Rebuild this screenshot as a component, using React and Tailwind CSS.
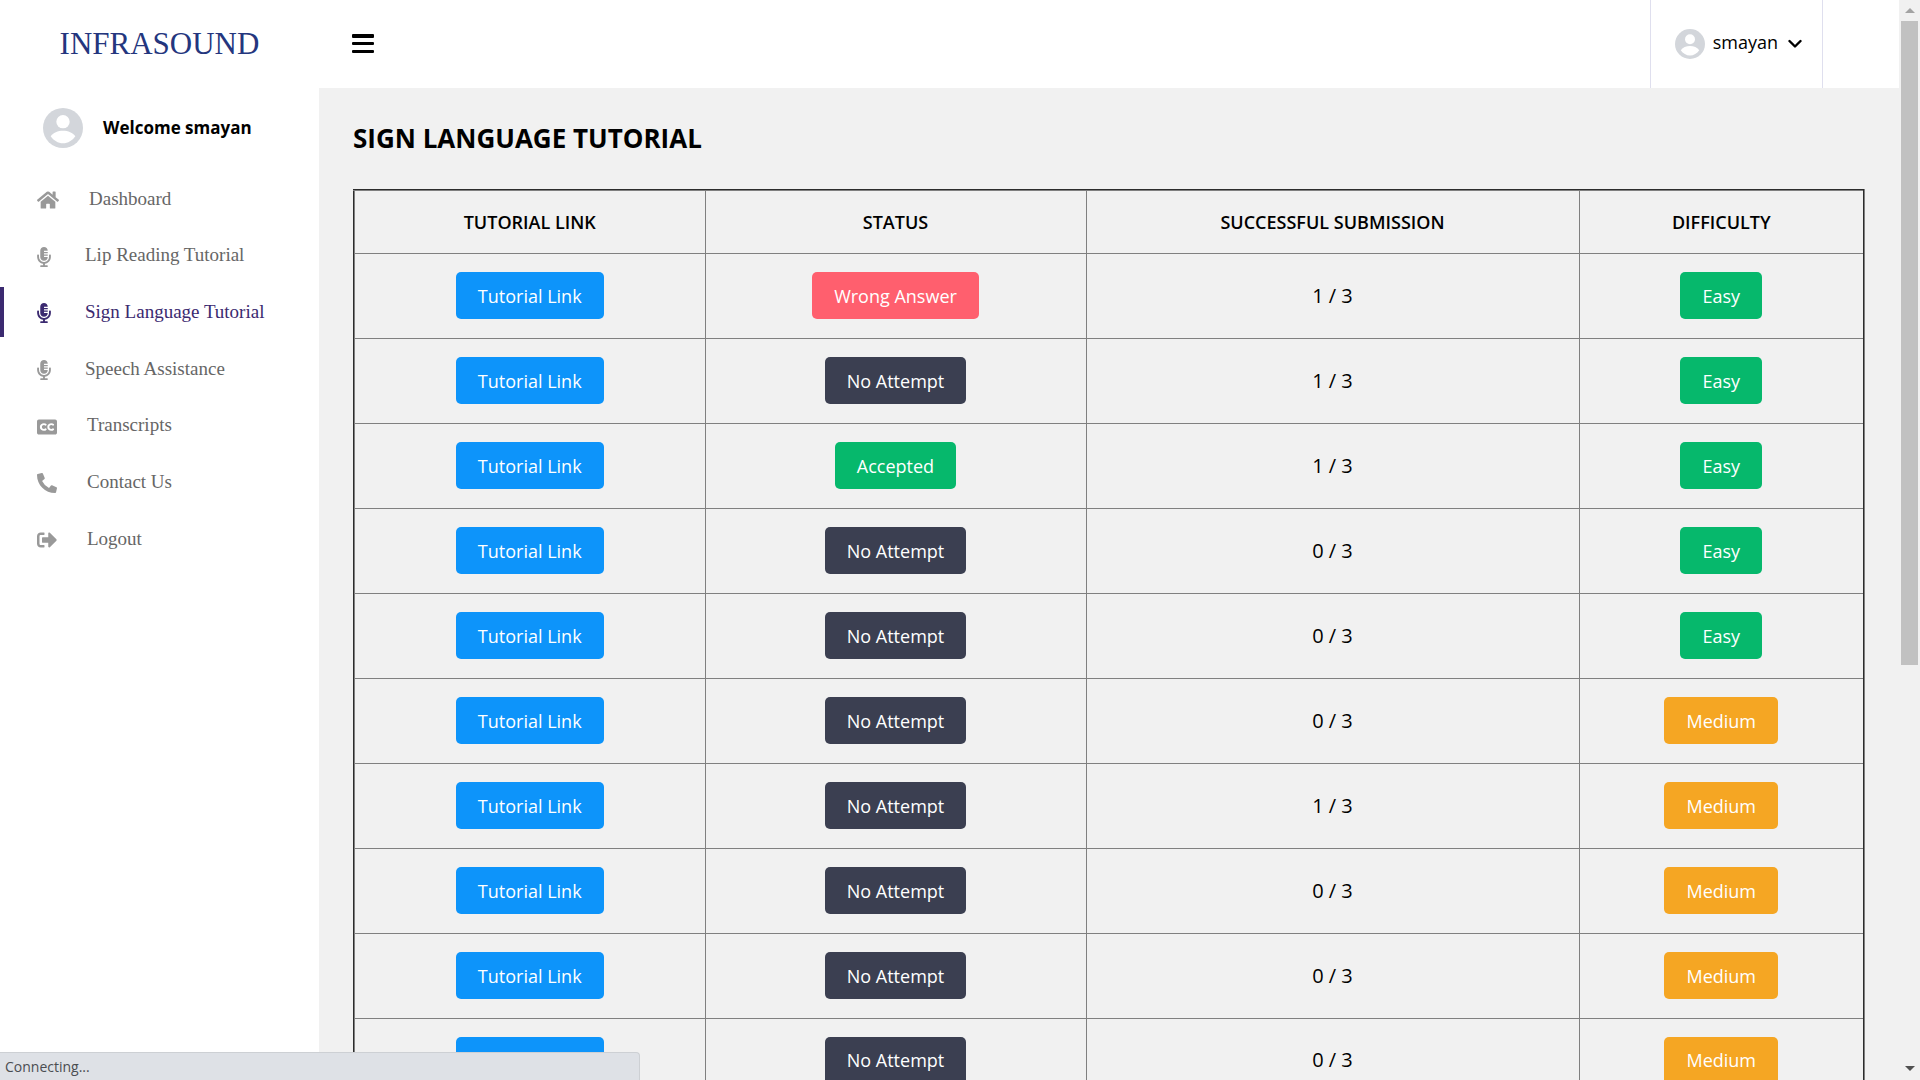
import React from "react";
import {
  FaHome,
  FaMicrophoneAlt,
  FaClosedCaptioning,
  FaPhoneAlt,
  FaSignOutAlt,
} from "react-icons/fa";

const NAV = [
  { label: "Dashboard", Icon: FaHome, icon: "w-[22px]", slot: "w-[52px]" },
  { label: "Lip Reading Tutorial", Icon: FaMicrophoneAlt, icon: "w-[14px]", slot: "w-12" },
  { label: "Sign Language Tutorial", Icon: FaMicrophoneAlt, icon: "w-[14px]", slot: "w-12", active: true },
  { label: "Speech Assistance", Icon: FaMicrophoneAlt, icon: "w-[14px]", slot: "w-12" },
  { label: "Transcripts", Icon: FaClosedCaptioning, icon: "w-5", slot: "w-[50px]" },
  { label: "Contact Us", Icon: FaPhoneAlt, icon: "w-5", slot: "w-[50px]" },
  { label: "Logout", Icon: FaSignOutAlt, icon: "w-5", slot: "w-[50px]" },
];

const STATUS = {
  wrong: { label: "Wrong Answer", color: "bg-[#ff5f6e]" },
  none: { label: "No Attempt", color: "bg-[#3b3f51]" },
  accepted: { label: "Accepted", color: "bg-[#06b86c]" },
};

const LEVEL = {
  easy: { label: "Easy", color: "bg-[#06b86c]" },
  medium: { label: "Medium", color: "bg-[#f5a623]" },
};

const ROWS = [
  { status: "wrong", done: 1, level: "easy" },
  { status: "none", done: 1, level: "easy" },
  { status: "accepted", done: 1, level: "easy" },
  { status: "none", done: 0, level: "easy" },
  { status: "none", done: 0, level: "easy" },
  { status: "none", done: 0, level: "medium" },
  { status: "none", done: 1, level: "medium" },
  { status: "none", done: 0, level: "medium" },
  { status: "none", done: 0, level: "medium" },
  { status: "none", done: 0, level: "medium" },
];

function Avatar({ className }) {
  return (
    <svg viewBox="0 0 120 120" className={className} aria-hidden="true">
      <circle cx="60" cy="60" r="60" fill="#d3d6db" />
      <circle cx="60" cy="41" r="20" fill="#fff" />
      <path d="M23 85C30 74 45 68 60 68S90 74 97 85C88 98 75 106 60 106S32 98 23 85Z" fill="#fff" />
    </svg>
  );
}

function Pill({ as: Tag = "button", color, children, ...rest }) {
  return (
    <Tag
      {...rest}
      className={`inline-flex h-[47px] items-center rounded-[5px] px-[22px] text-lg text-white ${color}`}
    >
      {children}
    </Tag>
  );
}

function Sidebar() {
  return (
    <aside className="flex w-[319px] shrink-0 flex-col bg-white">
      <div className="flex h-[88px] items-center justify-center font-['Liberation_Serif',serif] text-[31px] text-[#24367e]">
        INFRASOUND
      </div>
      <div className="mt-5 flex items-center pl-[43px]">
        <Avatar className="size-10" />
        <span className="ml-5 text-[17px] font-bold leading-7">Welcome smayan</span>
      </div>
      <nav className="mt-[26px] flex h-[390px] flex-col justify-between font-['Liberation_Serif',serif] text-[19px]">
        {NAV.map(({ label, Icon, icon, slot, active }) => (
          <a
            key={label}
            href="#"
            className={`flex h-[50px] items-center border-l-4 pl-[33px] ${
              active ? "border-[#3b2a70] text-[#3b2a70]" : "border-transparent text-[#666]"
            }`}
          >
            <span className={`pt-0.5 ${slot} ${active ? "" : "text-[#999]"}`}>
              <Icon className={`h-5 ${icon}`} />
            </span>
            {label}
          </a>
        ))}
      </nav>
    </aside>
  );
}

function Header() {
  return (
    <header className="flex h-[88px] shrink-0 items-center justify-between bg-white pl-[33px] pr-[76px]">
      <button aria-label="Toggle menu">
        <svg viewBox="0 0 22 20" className="h-5 w-[22px]">
          <rect width="22" height="4" y="0" rx="1" />
          <rect width="22" height="3" y="8" rx="1" />
          <rect width="22" height="3" y="16" rx="1" />
        </svg>
      </button>
      <button className="flex h-full items-center border-x border-[#dfdfee] pl-6 pr-5">
        <Avatar className="size-[30px]" />
        <span className="ml-2 pb-1 text-lg">smayan</span>
        <svg viewBox="0 0 14 10" className="ml-2.5 h-2.5 w-3.5" fill="none" stroke="#000" strokeWidth="2.4">
          <path d="M1.5 2L7 7.5L12.500 2" strokeLinecap="round" strokeLinejoin="round" />
        </svg>
      </button>
    </header>
  );
}

function TutorialTable() {
  return (
    <table className="w-full table-fixed border-collapse border-2 border-[#808080] text-center text-xl [border-style:groove]">
      <thead>
        <tr className="h-[63px] text-lg">
          <th className="w-[351px] border border-[#808080] font-semibold">TUTORIAL LINK</th>
          <th className="w-[381px] border border-[#808080] font-semibold">STATUS</th>
          <th className="w-[493px] border border-[#808080] font-semibold">SUCCESSFUL SUBMISSION</th>
          <th className="border border-[#808080] font-semibold">DIFFICULTY</th>
        </tr>
      </thead>
      <tbody>
        {ROWS.map((row, i) => (
          <tr key={i} className="h-[85px]">
            <td className="border border-[#808080]">
              <Pill as="a" href="#" color="bg-[#0d94fa]">Tutorial Link</Pill>
            </td>
            <td className="border border-[#808080]">
              <Pill color={STATUS[row.status].color}>{STATUS[row.status].label}</Pill>
            </td>
            <td className="border border-[#808080]">{row.done} / 3</td>
            <td className="border border-[#808080]">
              <Pill color={LEVEL[row.level].color}>{LEVEL[row.level].label}</Pill>
            </td>
          </tr>
        ))}
      </tbody>
    </table>
  );
}

function Scrollbar() {
  return (
    <div className="flex w-[21px] shrink-0 flex-col items-center bg-[#f1f1f1]" aria-hidden="true">
      <div className="flex h-[21px] shrink-0 items-center">
        <svg viewBox="0 0 10 5" className="h-[5px] w-2.5" fill="#a3a3a3"><path d="M0 5L5 0L10 5Z" /></svg>
      </div>
      <div className="w-[17px] basis-[644px] bg-[#c1c1c1]" />
      <div className="flex-1" />
      <div className="flex h-[23px] shrink-0 items-center">
        <svg viewBox="0 0 10 5" className="h-[5px] w-2.5" fill="#505050"><path d="M0 0L5 5L10 0Z" /></svg>
      </div>
    </div>
  );
}

export default function App() {
  return (
    <div className="relative flex h-screen overflow-hidden bg-[#f1f1f1] font-['Open_Sans',sans-serif] text-black">
      <Sidebar />
      <div className="flex min-w-0 flex-1 flex-col">
        <Header />
        <main className="min-h-0 flex-1 overflow-hidden px-[34px] pt-8">
          <h1 className="mb-[33px] text-[26px] font-bold leading-9">SIGN LANGUAGE TUTORIAL</h1>
          <TutorialTable />
        </main>
      </div>
      <Scrollbar />
      <div className="absolute bottom-0 left-0 flex h-7 w-1/3 items-center rounded-tr border-r border-t border-[#cdd0d4] bg-[#dee1e6] pl-[5px] text-sm text-[#4a4d51]">
        Connecting...
      </div>
    </div>
  );
}
